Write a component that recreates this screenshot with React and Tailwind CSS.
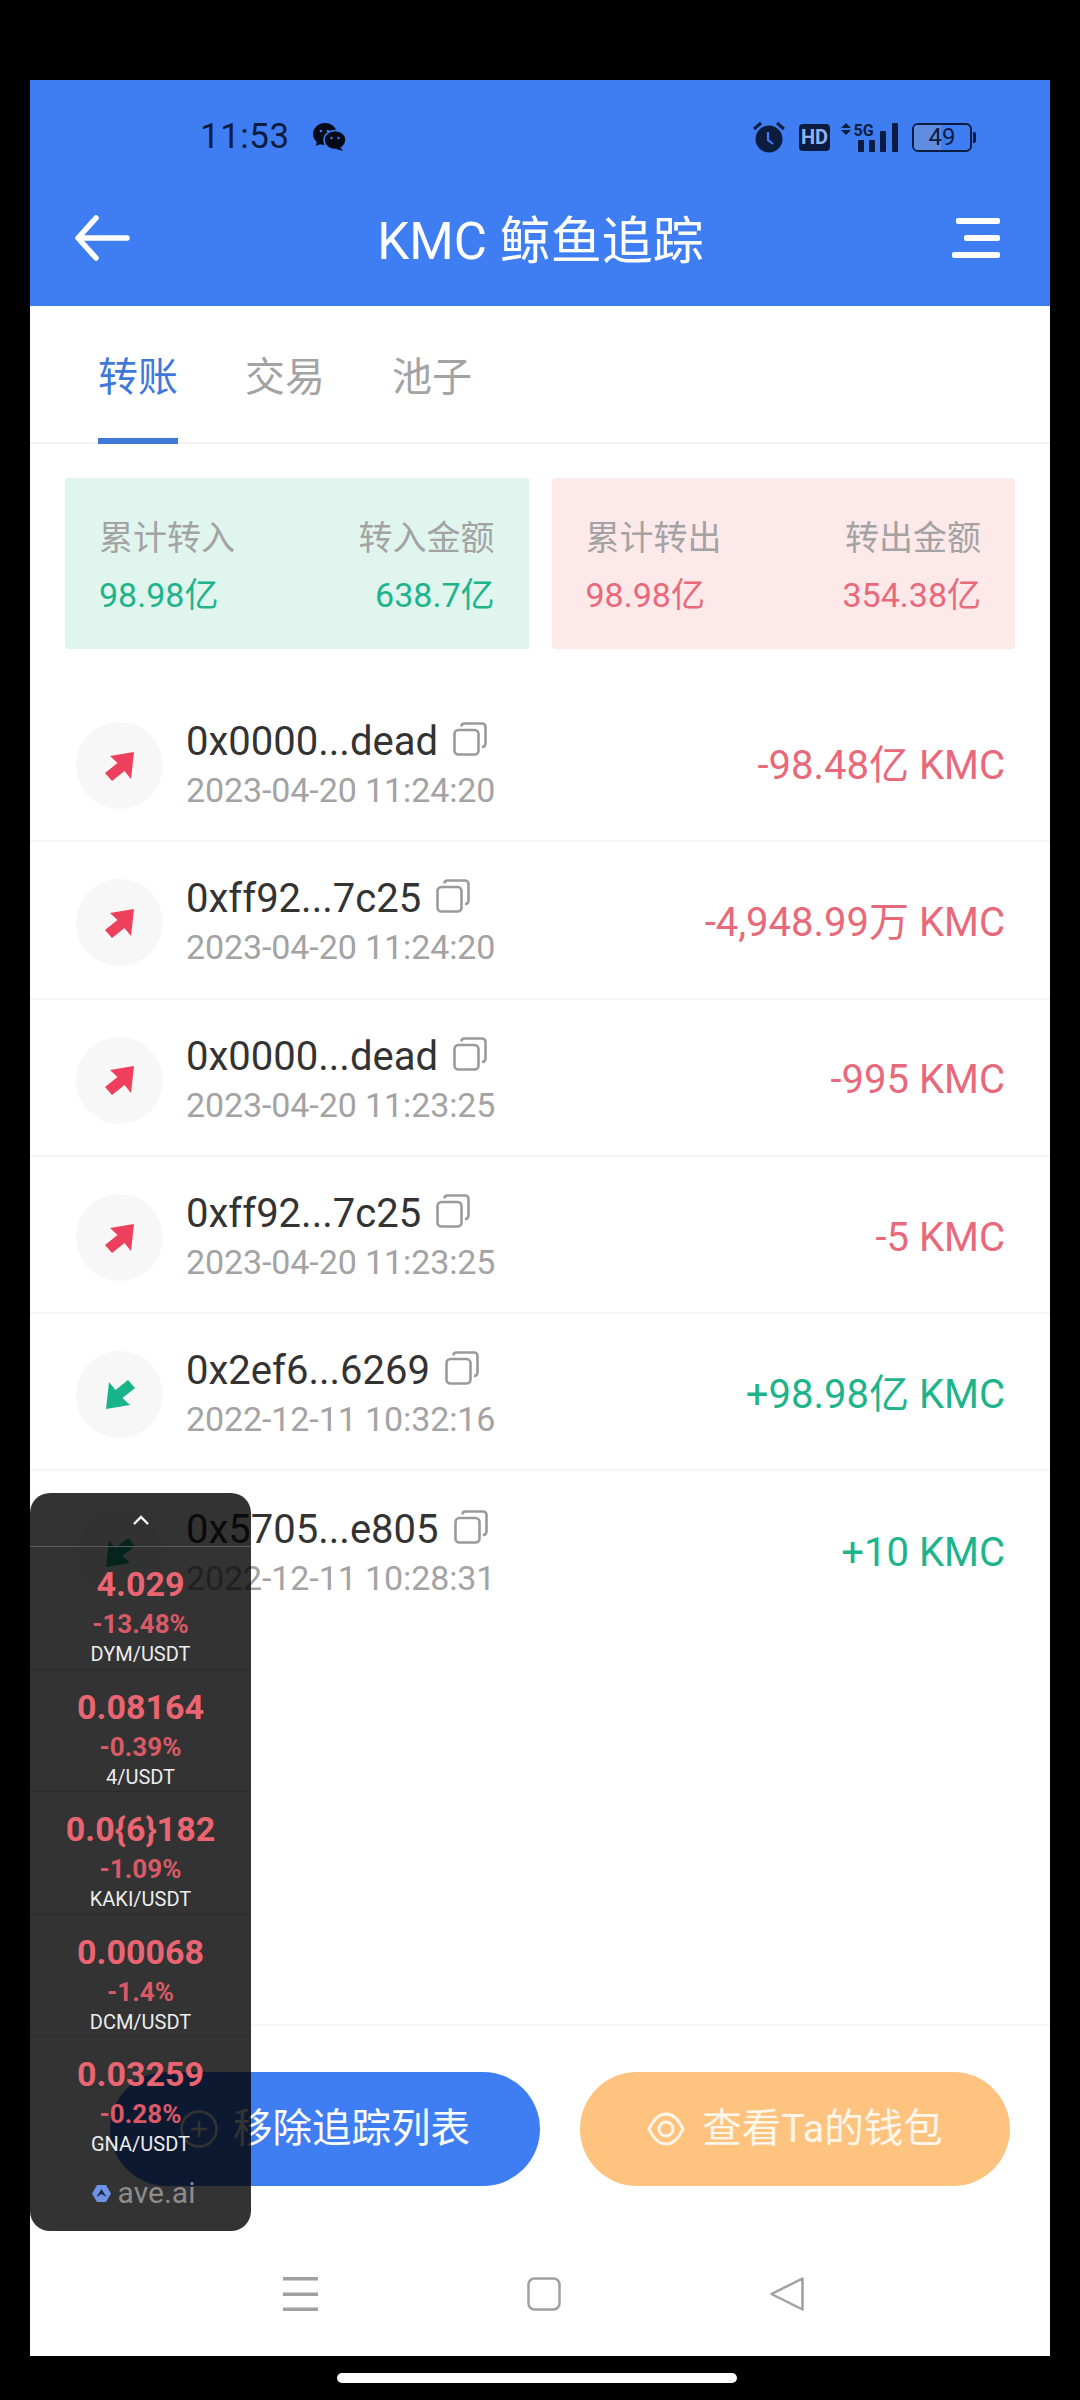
import React from "react";

const rows = [
  { a: "0x0000...dead", d: "2023-04-20 11:24:20", v: "-98.48亿 KMC", up: true },
  { a: "0xff92...7c25", d: "2023-04-20 11:24:20", v: "-4,948.99万 KMC", up: true },
  { a: "0x0000...dead", d: "2023-04-20 11:23:25", v: "-995 KMC", up: true },
  { a: "0xff92...7c25", d: "2023-04-20 11:23:25", v: "-5 KMC", up: true },
  { a: "0x2ef6...6269", d: "2022-12-11 10:32:16", v: "+98.98亿 KMC", up: false },
  { a: "0x5705...e805", d: "2022-12-11 10:28:31", v: "+10 KMC", up: false },
];

const tickers = [
  { p: "4.029", c: "-13.48%", n: "DYM/USDT" },
  { p: "0.08164", c: "-0.39%", n: "4/USDT" },
  { p: "0.0{6}182", c: "-1.09%", n: "KAKI/USDT" },
  { p: "0.00068", c: "-1.4%", n: "DCM/USDT" },
  { p: "0.03259", c: "-0.28%", n: "GNA/USDT" },
];

const Arrow = ({ up }) => (
  <svg width="30" height="30" viewBox="0 0 30 30" className="block">
    <polygon
      fill={up ? "#ee3f5c" : "#17b48a"}
      transform={up ? undefined : "rotate(180 15 15)"}
      points="29,1 26,28 19.5,20 7,30 0,22 12.5,12 5,5"
    />
  </svg>
);

const Copy = () => (
  <svg width="34" height="34" viewBox="0 0 34 34" fill="none" stroke="#9a9a9a" strokeWidth="2.6" className="block">
    <rect x="1.5" y="8" width="24" height="24.5" rx="4" />
    <path d="M8.5 4.5 C8.5 2.5 9.5 1.5 11.5 1.5 H29 C31 1.5 32.5 3 32.5 5 V21 C32.5 23.5 31 25 29 25" />
  </svg>
);

const Stat = ({ bg, color, l1, l2, v1, v2, rounded }) => (
  <div className={`flex-1 h-[171px] flex flex-col pt-[42px] pl-[34px] pr-[34px] ${bg} ${rounded}`}>
    <div className="flex justify-between text-[34px] leading-[36px] text-[#a3a3a3]">
      <span>{l1}</span>
      <span>{l2}</span>
    </div>
    <div className={`flex justify-between mt-[20px] text-[34px] leading-[38px] ${color}`}>
      <span>{v1}</span>
      <span>{v2}</span>
    </div>
  </div>
);

const F = { fontFamily: 'Roboto, "Noto Sans CJK SC", sans-serif' };

export default function App() {
  return (
    <div className="relative w-[1080px] h-[2400px] bg-black pt-[80px] px-[30px] overflow-hidden" style={F}>
      <div className="w-[1020px] h-[2276px] bg-white flex flex-col">
        {/* header */}
        <div className="h-[226px] bg-[#3f7ef2] flex flex-col shrink-0">
          <div className="h-[117px] flex items-center pl-[170px] pr-[74px] justify-between text-[#0b1c3f]">
            <div className="flex items-center gap-[23px] mt-[-3px]">
              <span className="text-[35px] leading-[40px] tracking-[0.5px]">11:53</span>
              <svg width="33" height="28" viewBox="0 0 33 28" className="block">
                <ellipse cx="12" cy="11" rx="12" ry="11" fill="#050a18" />
                <path d="M4 17 L3 23 L10 20 Z" fill="#050a18" />
                <ellipse cx="22" cy="17" rx="11" ry="9.5" fill="#050a18" stroke="#3f7ef2" strokeWidth="1.5" />
                <path d="M27 24 L30 28 L23 26 Z" fill="#050a18" />
                <circle cx="8" cy="8" r="1.3" fill="#3f7ef2" />
                <circle cx="15" cy="8" r="1.3" fill="#3f7ef2" />
                <circle cx="18.5" cy="15" r="1.2" fill="#3f7ef2" />
                <circle cx="25.5" cy="15" r="1.2" fill="#3f7ef2" />
              </svg>
            </div>
            <div className="flex items-center mt-[-3px]">
              <svg width="32" height="32" viewBox="0 0 32 32" className="block">
                <circle cx="16" cy="18" r="13.5" fill="#0b1c3f" />
                <path d="M15 11 V19 L20 23" fill="none" stroke="#3f7ef2" strokeWidth="2.2" />
                <path d="M1 8 L8 2 M31 8 L24 2" stroke="#0b1c3f" strokeWidth="3" />
              </svg>
              <span className="ml-[14px] w-[31px] h-[27px] rounded-[4px] bg-[#0b1c3f] text-[#8fb2f5] text-[20px] leading-[27px] font-bold text-center">HD</span>
              <svg width="58" height="30" viewBox="0 0 58 30" className="block ml-[11px]">
                <path d="M0 6 L5 1 L10 6 Z M0 8 L10 8 L5 13 Z" fill="#0b1c3f" />
                <text x="12.5" y="13.5" fontSize="16" fontWeight="700" fill="#0b1c3f" style={{ fontFamily: "Roboto, sans-serif" }}>5G</text>
                <rect x="17" y="18" width="6" height="12" rx="1" fill="#0b1c3f" />
                <rect x="28" y="18" width="6" height="12" rx="1" fill="#0b1c3f" />
                <rect x="39" y="9" width="6" height="21" rx="1" fill="#0b1c3f" />
                <rect x="51" y="1" width="6" height="29" rx="1" fill="#0b1c3f" />
              </svg>
              <div className="relative ml-[13px] w-[60px] h-[29px] rounded-[6px] border-2 border-[#0b1c3f] overflow-hidden flex items-center justify-center">
                <div className="absolute left-0 top-0 bottom-0 w-[49%] bg-[#5f8ee0]" />
                <span className="relative text-[24px] leading-[25px] text-[#0b1c3f]">49</span>
              </div>
              <div className="ml-[1px] w-[3px] h-[11px] bg-[#0b1c3f] rounded-r-[2px]" />
            </div>
          </div>
          <div className="relative h-[76px] flex items-center justify-center text-white text-[51px] leading-[60px]">
            <span className="ml-[1px] mt-[14px]">KMC 鲸鱼追踪</span>
            <svg width="56" height="46" viewBox="0 0 56 46" fill="none" stroke="white" strokeWidth="5.5" strokeLinecap="round" strokeLinejoin="round" className="absolute left-[44px] top-[18px]">
              <path d="M53 23 H5 M22 3 L4 23 L22 43" />
            </svg>
            <svg width="48" height="42" viewBox="0 0 48 42" className="absolute left-[922px] top-[20px]" fill="white">
              <rect x="4" y="1" width="44" height="6" rx="2" />
              <rect x="12" y="18" width="36" height="6" rx="2" />
              <rect x="0" y="35" width="48" height="6" rx="2" />
            </svg>
          </div>
        </div>

        {/* tabs */}
        <div className="h-[138px] shrink-0 border-b-2 border-[#f2f2f2] flex pl-[68px] gap-[67px] text-[40px] leading-[46px] text-[#a3a3a3]">
          <div className="relative pt-[49px] text-[#3f78d8] whitespace-nowrap">
            转账
            <div className="absolute left-0 w-[80px] bottom-[-2px] h-[6px] bg-[#3f78d8]" />
          </div>
          <div className="pt-[49px]">交易</div>
          <div className="pt-[49px]">池子</div>
        </div>

        {/* stats */}
        <div className="flex pl-[35px] pr-[35px] gap-[23px] pt-[34px] shrink-0">
          <Stat bg="bg-[#e0f5ee]" color="text-[#1eb48b]" l1="累计转入" l2="转入金额" v1="98.98亿" v2="638.7亿" rounded="rounded-l-[4px]" />
          <Stat bg="bg-[#fde8ea]" color="text-[#e8697a]" l1="累计转出" l2="转出金额" v1="98.98亿" v2="354.38亿" rounded="rounded-[4px]" />
        </div>

        {/* rows */}
        <div className="mt-[36px] flex flex-col flex-1 min-h-0">
          {rows.map((r, i) => (
            <div
              key={i}
              className={`h-[157.3px] shrink-0 pt-[6px] flex items-center pl-[46px] pr-[45px] ${i < 5 ? "border-b-2 border-[#f5f5f5]" : ""}`}
            >
              <div className="w-[87px] h-[87px] rounded-full bg-[#f7f7f7] flex items-center justify-center shrink-0">
                <Arrow up={r.up} />
              </div>
              <div className="ml-[23px] flex flex-col mt-[-2px]">
                <div className="flex items-center gap-[15px]">
                  <span className="text-[40px] leading-[46px] text-[#333333]">{r.a}</span>
                  <span className="mt-[-6px]"><Copy /></span>
                </div>
                <span className="mt-[5px] text-[34px] leading-[40px] tracking-[-0.1px] text-[#a3a3a3]">{r.d}</span>
              </div>
              <div className={`ml-auto text-[40px] leading-[46px] ${r.up ? "text-[#e8697a]" : "text-[#1eb48b]"}`}>{r.v}</div>
            </div>
          ))}
        </div>

        {/* footer */}
        <div className="h-[332px] shrink-0 border-t-2 border-[#f6f6f6] flex flex-col">
          <div className="flex pt-[46px] pl-[80px] pr-[40px] gap-[40px] text-[39.5px] leading-[46px]">
            <button className="flex-1 h-[114px] rounded-[57px] bg-[#3f7ef2] text-white flex items-center justify-center gap-[15px]">
              <svg width="38" height="38" viewBox="0 0 38 38" fill="none" stroke="white" strokeWidth="2.5" className="block">
                <circle cx="19" cy="19" r="17.5" />
                <path d="M19 11 V27 M11 19 H27" />
              </svg>
              <span>移除追踪列表</span>
            </button>
            <button className="flex-1 h-[114px] rounded-[57px] bg-[#fec37f] text-[#fff6ea] flex items-center justify-center gap-[17px]">
              <svg width="38" height="34" viewBox="0 0 38 34" fill="none" stroke="#fff6ea" strokeWidth="3" className="block">
                <path d="M2 17 C7 6 13 2 19 2 C25 2 31 6 36 17 C31 28 25 32 19 32 C13 32 7 28 2 17 Z" />
                <circle cx="19" cy="17" r="7" />
              </svg>
              <span>查看Ta的钱包</span>
            </button>
          </div>
          <div className="mt-[91px] pl-[7px] flex items-center justify-center gap-[209px]">
            <svg width="35" height="34" viewBox="0 0 35 34" fill="#a0a0a0" className="block">
              <rect x="0" y="0" width="35" height="3.5" />
              <rect x="0" y="15.5" width="35" height="3.5" />
              <rect x="0" y="30.5" width="35" height="3.5" />
            </svg>
            <svg width="34" height="34" viewBox="0 0 34 34" fill="none" stroke="#a0a0a0" strokeWidth="2.5" className="block">
              <rect x="1.5" y="1.5" width="31" height="31" rx="6" />
            </svg>
            <svg width="34" height="34" viewBox="0 0 34 34" fill="none" stroke="#a0a0a0" strokeWidth="2.5" strokeLinejoin="round" className="block">
              <path d="M32.5 1.5 V32.5 L1.5 17 Z" />
            </svg>
          </div>
        </div>
      </div>

      {/* home indicator */}
      <div className="ml-[307px] mt-[17px] w-[400px] h-[10px] rounded-full bg-white" />

      {/* floating ticker widget */}
      <div className="absolute left-[30px] top-[1493px] w-[221px] h-[738px] rounded-[20px] bg-black/80 flex flex-col text-center">
        <div className="h-[54px] shrink-0 border-b border-[#5a5a5a] flex items-center justify-center">
          <svg width="16" height="10" viewBox="0 0 16 10" fill="none" stroke="white" strokeWidth="2.4" className="block">
            <path d="M1 9 L8 2 L15 9" />
          </svg>
        </div>
        {tickers.map((t, i) => (
          <div key={i} className={`h-[122.5px] shrink-0 pt-[17px] ${i < 4 ? "border-b border-[#2b2b2b]" : ""}`}>
            <div className="text-[34px] leading-[40px] font-bold text-[#ea6571]">{t.p}</div>
            <div className="mt-[5px] text-[26px] leading-[30px] font-bold text-[#d95a66]">{t.c}</div>
            <div className="mt-[3px] text-[20px] leading-[24px] text-[#ececec]">{t.n}</div>
          </div>
        ))}
        <div className="flex-1 flex items-center justify-center gap-[7px] pb-[4px] pl-[6px]">
          <svg width="19" height="19" viewBox="0 0 19 19" className="block">
            <polygon points="5,1 14,1 19,9.5 14,18 5,18 0,9.5" fill="#6d92e6" />
            <path d="M4.5 13 L9.5 5 L14.5 13 L9.5 10 Z" fill="#1c2a4a" />
          </svg>
          <span className="text-[30px] leading-[34px] text-[#8c8c8c]">ave.ai</span>
        </div>
      </div>
    </div>
  );
}
